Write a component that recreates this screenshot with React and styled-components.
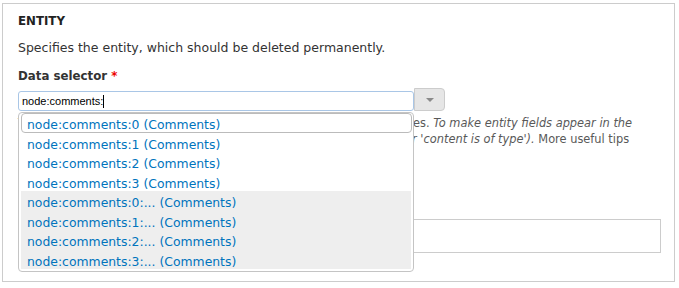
import React from 'react'
import styled, { createGlobalStyle } from 'styled-components'

const GlobalStyle = createGlobalStyle`
  html, body {
    margin: 0;
    padding: 0;
    background: #fff;
  }
  body {
    font-family: "DejaVu Sans", Verdana, sans-serif;
    color: #333;
  }
`

const Page = styled.div`
  padding: 3px 0 0 2px;
`

const Fieldset = styled.section`
  box-sizing: border-box;
  width: 673px;
  height: 279px;
  border: 1px solid #ccc;
  padding: 10px 13px 0 15px;
`

const Title = styled.h2`
  margin: 0;
  font-size: 11.8px;
  line-height: 15px;
  font-weight: 700;
  color: #222;
  text-transform: uppercase;
`

const Description = styled.p`
  margin: 10px 0 0;
  font-size: 12.5px;
  line-height: 18px;
`

const Label = styled.label`
  display: block;
  margin-top: 12px;
  font-size: 11.8px;
  line-height: 15px;
  font-weight: 700;
`

const Required = styled.span`
  color: #e00;
`

const Field = styled.div`
  position: relative;
  display: flex;
  align-items: flex-end;
  margin-top: 4px;
`

const TextInput = styled.div`
  box-sizing: border-box;
  width: 396px;
  height: 20px;
  padding: 0 3px;
  border: 1px solid #a9c6e6;
  border-radius: 3px;
  display: flex;
  align-items: center;
  font-family: "Liberation Sans", Arial, sans-serif;
  font-size: 11px;
  color: #000;
`

const Caret = styled.span`
  display: inline-block;
  width: 1px;
  height: 13px;
  background: #000;
`

const Toggle = styled.button`
  box-sizing: border-box;
  width: 31px;
  height: 23px;
  padding: 0;
  border: 1px solid #ccc;
  border-radius: 0 4px 4px 0;
  background: #e6e6e6;
  display: flex;
  align-items: center;
  justify-content: center;
`

const Arrow = styled.span`
  width: 0;
  height: 0;
  border-left: 4px solid transparent;
  border-right: 4px solid transparent;
  border-top: 4px solid #8a8a8a;
`

const Menu = styled.ul`
  position: absolute;
  top: 24px;
  left: 0;
  box-sizing: border-box;
  width: 396px;
  margin: 0;
  padding: 0 1px 2px 2px;
  list-style: none;
  background: #fff;
  border: 1px solid #c4c4c4;
  border-radius: 4px;
  z-index: 2;
`

const Group = styled.div`
  background: ${p => (p.$muted ? '#eee' : 'transparent')};
  margin-right: ${p => (p.$muted ? '1px' : '0')};
`

const Item = styled.li`
  box-sizing: border-box;
  height: 19.5px;
  line-height: 21px;
  padding: 0 5px;
  border: 1px solid ${p => (p.$active ? '#bbb' : 'transparent')};
  border-radius: 4px;
  font-size: 12.4px;
  color: #0074bd;
  white-space: nowrap;
`

const Help = styled.div`
  margin-top: 5px;
  font-size: 11.4px;
  line-height: 15.6px;
  color: #595959;
  white-space: nowrap;
`

const Box = styled.div`
  box-sizing: border-box;
  height: 34px;
  margin-top: 56.5px;
  border: 1px solid #ccc;
`

const plain = ['0', '1', '2', '3']

export default function App() {
  return (
    <Page>
      <GlobalStyle />
      <Fieldset>
        <Title>Entity</Title>
        <Description>Specifies the entity, which should be deleted permanently.</Description>
        <Label>
          Data selector <Required>*</Required>
        </Label>
        <Field>
          <TextInput>
            node:comments:<Caret />
          </TextInput>
          <Toggle type="button">
            <Arrow />
          </Toggle>
          <Menu>
            <Group>
              {plain.map((n, i) => (
                <Item key={n} $active={i === 0}>
                  node:comments:{n} (Comments)
                </Item>
              ))}
            </Group>
            <Group $muted>
              {plain.map(n => (
                <Item key={n}>node:comments:{n}:... (Comments)</Item>
              ))}
            </Group>
          </Menu>
        </Field>
        <Help>
          The data selector helps you to drill down into all the available variables.{' '}
          <em>To make entity fields appear in the</em>
          <br />
          <em>data selector, you will have to use the condition 'entity has a field' (or 'content is of type').</em> More useful tips
          <br />
          about data selection is available in the online documentation.
        </Help>
        <Box />
      </Fieldset>
    </Page>
  )
}
